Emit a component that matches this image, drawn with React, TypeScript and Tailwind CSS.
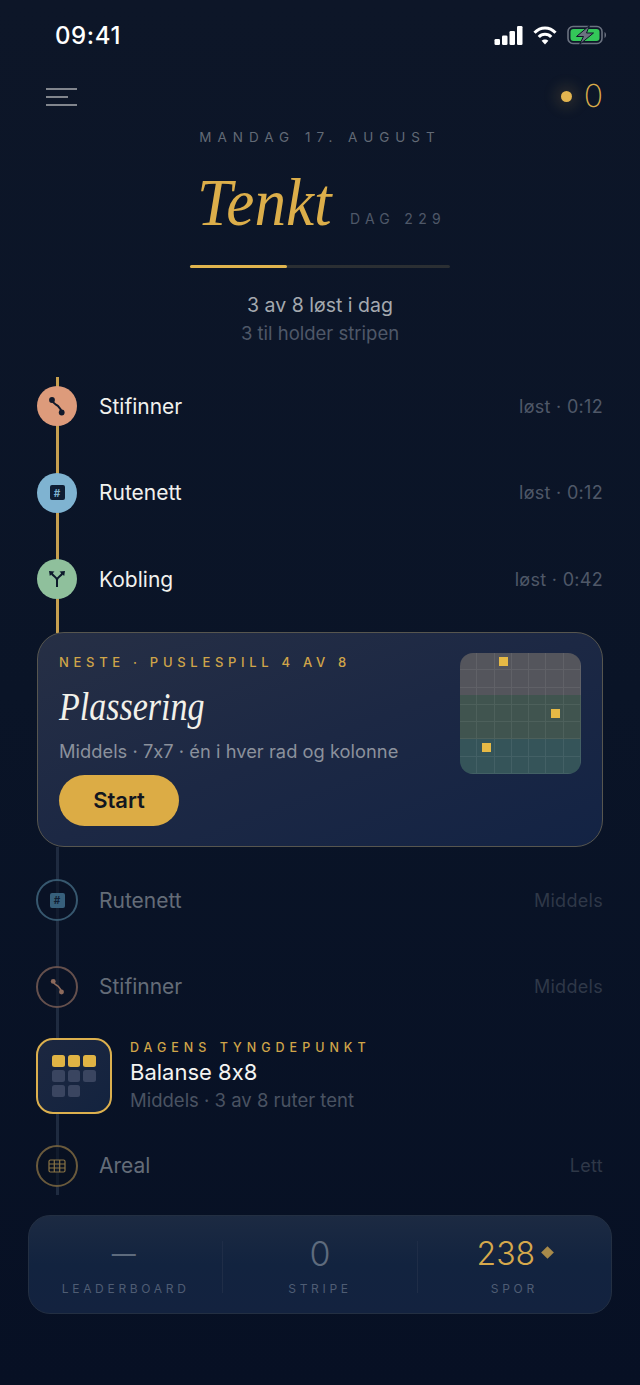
const SANS = "font-['Inter','Noto_Sans',sans-serif] [font-feature-settings:'calt'_0]"

function PathIcon({ color, size = 20 }: { color: string; size?: number }) {
  return (
    <svg width={size} height={size} viewBox="0 0 20 20" fill="none">
      <path d="M5 4 C6.5 8.5 9 8 11 10 C13 12 14 13 14.7 16.5" stroke={color} strokeWidth="2" />
      <circle cx="5" cy="4" r="2.9" fill={color} />
      <circle cx="14.7" cy="16.5" r="2.9" fill={color} />
    </svg>
  )
}

function HashIcon({ boxClass, textClass }: { boxClass: string; textClass: string }) {
  return (
    <div className={`flex h-[15px] w-[15px] items-center justify-center rounded-[2px] ${boxClass}`}>
      <span className={`text-[10px] leading-none font-bold ${textClass}`}>#</span>
    </div>
  )
}

function ForkIcon() {
  return (
    <svg width="20" height="20" viewBox="0 0 20 20" fill="none" stroke="#0d1a2c" strokeWidth="2">
      <path d="M10 18 V10" />
      <path d="M10 11 C10 8 6 7.5 4.5 4" />
      <path d="M10 11 C10 8 14 7.5 15.5 4" />
      <polygon points="2,2 7.5,2.5 2.8,7" fill="#0d1a2c" stroke="none" />
      <polygon points="18,2 12.5,2.5 17.2,7" fill="#0d1a2c" stroke="none" />
    </svg>
  )
}

function GridIcon() {
  return (
    <svg width="18" height="14" viewBox="0 0 18 14" fill="none" stroke="#8a7445" strokeWidth="1.2">
      <rect x="1" y="1" width="16" height="12" rx="1.5" />
      <path d="M1 5 H17 M1 9 H17 M6.3 1 V13 M11.7 1 V13" />
    </svg>
  )
}

function PuzzleRow({
  name,
  status,
  icon,
  circleClass,
  nameClass,
  statusClass,
}: {
  name: string
  status: string
  icon: React.ReactNode
  circleClass: string
  nameClass: string
  statusClass: string
}) {
  return (
    <div className="relative flex h-[86.5px] items-center">
      <div className={`flex shrink-0 items-center justify-center rounded-full ${circleClass}`}>{icon}</div>
      <span className={`ml-[22px] text-[21px] ${nameClass}`}>{name}</span>
      <span className={`ml-auto text-[18px] tracking-[0.3px] ${statusClass}`}>{status}</span>
    </div>
  )
}

function PlacementBoard() {
  return (
    <div className="relative h-[121px] w-[121px] shrink-0 overflow-hidden rounded-[13px]">
      <div className="h-[42px] bg-[#54555c]" />
      <div className="h-[44px] bg-[#40544f]" />
      <div className="h-[35px] bg-[#355459]" />
      <div className="absolute inset-0 grid grid-cols-7 grid-rows-7">
        {Array.from({ length: 49 }, (_, i) => (
          <div key={i} className="border-r border-b border-white/[0.07]" />
        ))}
      </div>
      <div className="absolute top-[4px] left-[39px] h-[9px] w-[9px] bg-[#e6b945]" />
      <div className="absolute top-[56px] left-[91px] h-[9px] w-[9px] bg-[#e6b945]" />
      <div className="absolute top-[90px] left-[22px] h-[9px] w-[9px] bg-[#e6b945]" />
    </div>
  )
}

function FooterStat({ value, label, valueClass, extra }: { value: string; label: string; valueClass: string; extra?: React.ReactNode }) {
  return (
    <div className="flex flex-1 flex-col items-center">
      <div className="flex h-[36px] items-center">
        <span className={`leading-none ${valueClass}`}>{value}</span>
        {extra}
      </div>
      <span className="mt-[9px] text-[12px] leading-[16px] tracking-[3.7px] text-[#4f5d74]">{label}</span>
    </div>
  )
}

export default function App() {
  return (
    <div className={`h-[1385px] w-[640px] overflow-hidden bg-gradient-to-b from-[#0d1628] via-[#0a1427] to-[#071024] ${SANS}`}>
      {/* Status bar */}
      <div className="flex h-[70px] items-center justify-between pr-[33px] pl-[55px]">
        <span className="mt-[2px] text-[24px] font-medium tracking-[0.6px] text-white">09:41</span>
        <div className="flex items-center gap-[10px]">
          <svg width="29" height="19" viewBox="0 0 28 19" fill="white">
            <rect x="0" y="13" width="5.5" height="6" rx="1.3" />
            <rect x="7.5" y="9.5" width="5.5" height="9.5" rx="1.3" />
            <rect x="15" y="5" width="5.5" height="14" rx="1.3" />
            <rect x="22.5" y="0" width="5.5" height="19" rx="1.3" />
          </svg>
          <svg width="24" height="19" viewBox="0 0 24 19" fill="none" stroke="white" strokeWidth="3">
            <path d="M1.5 6.8 C7.5 0.3 16.5 0.3 22.5 6.8" />
            <path d="M5.8 11 C9 7.3 15 7.3 18.2 11" />
            <path d="M12 18.5 L8.6 14.8 C10.5 13 13.5 13 15.4 14.8 Z" fill="white" stroke="none" />
          </svg>
          <svg width="40" height="20" viewBox="0 0 40 20" fill="none">
            <rect x="1" y="1.5" width="34" height="17" rx="5" stroke="#6b7280" strokeWidth="1.6" />
            <rect x="3.5" y="4" width="29" height="12" rx="3" fill="#34c759" />
            <path d="M37.5 7 C39.5 8 39.5 12 37.5 13 Z" fill="#6b7280" />
            <path d="M22.5 0.5 L9.5 11.5 H16.5 L12.5 19.5 L26.5 8 H19.5 Z" fill="#6b7280" stroke="#0d1628" strokeWidth="1" />
          </svg>
        </div>
      </div>

      {/* Top bar */}
      <div className="flex h-[52px] items-center justify-between pr-[37px] pl-[46px]">
        <svg className="mt-[2px]" width="32" height="18" viewBox="0 0 32 18" stroke="#a8abae" strokeWidth="1.5">
          <path d="M0 1 H31 M0 9 H22 M0 17 H31" />
        </svg>
        <div className="flex items-center gap-[12px]">
          <div className="h-[11px] w-[11px] rounded-full bg-[#e2b450] shadow-[0_0_14px_6px_rgba(226,180,80,0.13)]" />
          <span className="text-[32px] leading-none font-extralight text-[#d9ab4a]">0</span>
        </div>
      </div>

      {/* Header */}
      <div className="flex flex-col items-center">
        <div className="mt-[5px] text-[13.5px] leading-[20px] tracking-[6px] text-[#626a76]">MANDAG 17. AUGUST</div>
        <div className="mt-[23px] flex h-[64px] items-end pl-[3px]">
          <span className="inline-block w-[132px] origin-left scale-x-[0.93] font-['Liberation_Serif',serif] text-[68px] leading-[64px] text-[#dcae4a] italic">Tenkt</span>
          <span className="mb-[5px] ml-[21px] text-[14px] leading-[20px] tracking-[5.3px] text-[#4f5868]">DAG 229</span>
        </div>
        <div className="mt-[31px] h-[3px] w-[260px] rounded-full bg-[#2b2f33]">
          <div className="h-full w-[97px] rounded-full bg-[#e0b44e]" />
        </div>
        <div className="mt-[24px] text-[19.5px] leading-[26px] text-[#a4a9af]">3 av 8 løst i dag</div>
        <div className="mt-[2px] text-[18.5px] leading-[26px] text-[#4f5868]">3 til holder stripen</div>
      </div>

      {/* Timeline */}
      <div className="relative mt-[17px] px-[37px]">
        <div className="absolute top-[14px] left-[56px] h-[256px] w-[3px] bg-[#c7a04f]" />
        <div className="absolute top-[484px] left-[56px] h-[348px] w-[3px] bg-[#1f2b40]" />

        <PuzzleRow
          name="Stifinner"
          status="løst · 0:12"
          icon={<PathIcon color="#10192b" />}
          circleClass="h-10 w-10 bg-[#dd9b7b]"
          nameClass="text-[#f1f1ee]"
          statusClass="text-[#4f5868]"
        />
        <PuzzleRow
          name="Rutenett"
          status="løst · 0:12"
          icon={<HashIcon boxClass="bg-[#0f1d33]" textClass="text-[#7fb3d1]" />}
          circleClass="h-10 w-10 bg-[#7fb3d1]"
          nameClass="text-[#f1f1ee]"
          statusClass="text-[#4f5868]"
        />
        <PuzzleRow
          name="Kobling"
          status="løst · 0:42"
          icon={<ForkIcon />}
          circleClass="h-10 w-10 bg-[#8fc09c]"
          nameClass="text-[#f1f1ee]"
          statusClass="text-[#4f5868]"
        />

        {/* Next puzzle */}
        <div className="relative mt-[9.5px] flex h-[215px] justify-between rounded-[27px] border border-[#57564f] bg-gradient-to-br from-[#262f45] via-[#1c2844] to-[#132344] pt-[20px] pr-[21px] pl-[21px]">
          <div>
            <div className="text-[13px] leading-[18px] font-medium tracking-[4.7px] text-[#d0a549]">NESTE · PUSLESPILL 4 AV 8</div>
            <div className="mt-[11px] origin-left scale-x-[0.83] font-['Liberation_Serif',serif] text-[41px] leading-[48px] text-[#f2f1ea] italic">Plassering</div>
            <div className="mt-[8px] text-[18.3px] leading-[26px] tracking-[0.03px] text-[#8b919c]">Middels · 7x7 · én i hver rad og kolonne</div>
            <button className="mt-[11px] flex h-[51px] w-[120px] items-center justify-center rounded-full bg-[#dcac45] text-[22px] font-semibold text-[#12161f]">
              Start
            </button>
          </div>
          <PlacementBoard />
        </div>

        <div className="mt-[10px]">
          <PuzzleRow
            name="Rutenett"
            status="Middels"
            icon={<HashIcon boxClass="bg-[#37607c]" textClass="text-[#0f1d33]" />}
            circleClass="-mx-px h-[42px] w-[42px] border-2 border-[#37586f] bg-[#0a1325]/60"
            nameClass="text-[#646c78]"
            statusClass="text-[#2f3848]"
          />
          <PuzzleRow
            name="Stifinner"
            status="Middels"
            icon={<PathIcon color="#8d6a5c" size={17} />}
            circleClass="-mx-px h-[42px] w-[42px] border-2 border-[#65504d] bg-[#0a1325]/60"
            nameClass="text-[#646c78]"
            statusClass="text-[#2f3848]"
          />
        </div>

        {/* Daily focus */}
        <div className="relative mt-[8px] flex h-[76px] items-center">
          <div className="-ml-px flex h-[76px] w-[76px] shrink-0 items-center justify-center rounded-[17px] border-2 border-[#dcb04e] bg-gradient-to-br from-[#1c2740] to-[#13233f]">
            <div className="grid grid-cols-3 gap-[3px]">
              <div className="h-[12px] w-[12.5px] rounded-[2.5px] bg-[#e0b344]" />
              <div className="h-[12px] w-[12.5px] rounded-[2.5px] bg-[#e0b344]" />
              <div className="h-[12px] w-[12.5px] rounded-[2.5px] bg-[#e0b344]" />
              <div className="h-[12px] w-[12.5px] rounded-[2.5px] bg-[#3a4560]" />
              <div className="h-[12px] w-[12.5px] rounded-[2.5px] bg-[#3a4560]" />
              <div className="h-[12px] w-[12.5px] rounded-[2.5px] bg-[#3a4560]" />
              <div className="h-[12px] w-[12.5px] rounded-[2.5px] bg-[#3a4560]" />
              <div className="h-[12px] w-[12.5px] rounded-[2.5px] bg-[#3a4560]" />
            </div>
          </div>
          <div className="ml-[18px] flex flex-col">
            <span className="text-[12.5px] leading-[18px] font-medium tracking-[5px] text-[#d0a549]">DAGENS TYNGDEPUNKT</span>
            <span className="mt-[1px] text-[22px] leading-[28px] text-[#f4f4f1]">Balanse 8x8</span>
            <span className="mt-[1px] text-[18.5px] leading-[26px] text-[#4a5362]">Middels · 3 av 8 ruter tent</span>
          </div>
        </div>

        <div className="mt-[8.5px]">
          <PuzzleRow
            name="Areal"
            status="Lett"
            icon={<GridIcon />}
            circleClass="-mx-px h-[42px] w-[42px] border-2 border-[#6a5a3c] bg-[#08101f]/60"
            nameClass="text-[#646c78]"
            statusClass="text-[#2f3848]"
          />
        </div>
      </div>

      {/* Stats footer */}
      <div className="mx-[28px] mt-[6px] flex h-[99px] items-center rounded-[22px] border border-[#232f42] bg-gradient-to-b from-[#1c2a42] via-[#12233f] to-[#13223f] pt-[4px]">
        <FooterStat value="—" label="LEADERBOARD" valueClass="pr-[4px] text-[24px] font-normal text-[#5e6b7d]" />
        <div className="h-[52px] w-px bg-[#1f2d47]" />
        <FooterStat value="0" label="STRIPE" valueClass="text-[34px] font-light text-[#5e6b7d]" />
        <div className="h-[52px] w-px bg-[#1f2d47]" />
        <FooterStat
          value="238"
          label="SPOR"
          valueClass="text-[32px] font-light text-[#d6a94c]"
          extra={<div className="mb-[3px] ml-[8px] h-[9px] w-[9px] rotate-45 bg-[#a88a4a]" />}
        />
      </div>
    </div>
  )
}
